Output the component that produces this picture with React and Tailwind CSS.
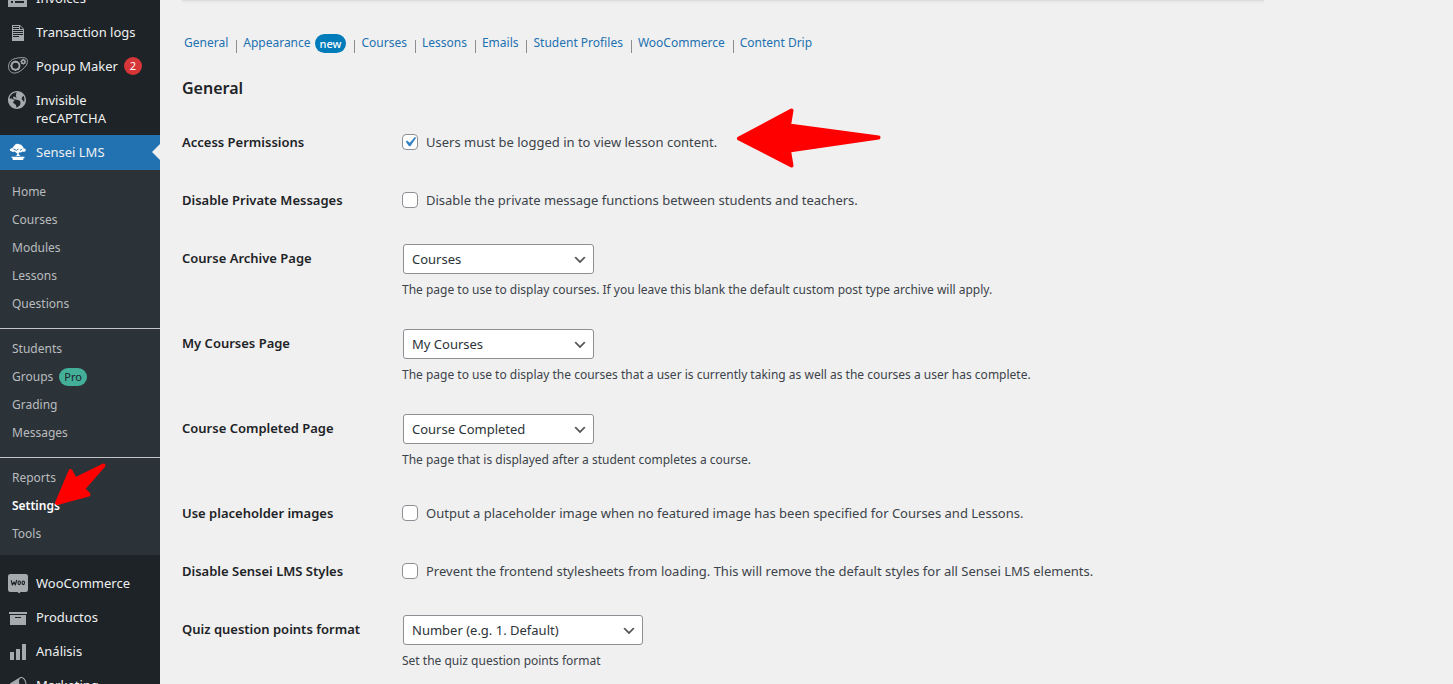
import React from "react";

const ICONS = {
    text: "M12 2l4 4v12H4V2h8zM5 3v1h6V3H5zm7 3h3l-3-3v3zM5 5v1h6V5H5zm10 3V7H5v1h10zm0 2V9H5v1h10zm0 2v-1H5v1h10zm-4 2v-1H5v1h6z",
    globe: "M9 0C4.03 0 0 4.03 0 9s4.03 9 9 9 9-4.03 9-9-4.03-9-9-9zm3.46 11.95c0 1.47-.8 3.3-4.06 4.7.3-4.17-2.52-3.69-3.2-5 .126-1.1.804-2.063 1.8-2.55-1.552-.266-3-.96-4.18-2 .05.47.28.904.64 1.21-.782-.295-1.458-.817-1.94-1.5.977-3.225 3.883-5.482 7.25-5.63-.84 1.38-1.5 4.13 0 5.57C7.23 7 6.26 5 5.41 5.79c-1.13 1.06.33 2.51 3.42 3.08 3.29.59 3.66 1.58 3.63 3.08zm1.34-4c-.32-1.11.62-2.23 1.69-3.14 1.027 1.88 1.224 4.104.54 6.13-.54-1.13-1.89-1.95-2.23-2.99z",
    archive: "M19 4v2H1V4h18zM2 7h16v10H2V7zm11 3V9H7v1h6z",
    chart: "M18 18V2h-4v16h4zm-6 0V7H8v11h4zm-6 0v-8H2v8h4z",
    megaphone: "M18.15 5.94c.46 1.62.38 3.22-.02 4.48-.42 1.28-1.26 2.18-2.3 2.48-.16.06-.26.06-.4.06-.06.02-.12.02-.18.02-.06.02-.14.02-.22.02h-6.8l2.22 5.5c.02.14-.06.26-.14.34-.08.1-.24.16-.34.16H6.95c-.1 0-.26-.06-.34-.16-.08-.08-.16-.2-.14-.34l-1-5.5H4.25l-.02-.02c-.5.06-1.08-.18-1.54-.62s-.88-1.08-1.06-1.88c-.24-.8-.2-1.56-.02-2.2.18-.62.58-1.08 1.06-1.3l.02-.02 9-5.4c.1-.06.18-.1.24-.16.06-.04.14-.08.24-.12.16-.08.28-.12.5-.18 1.04-.3 2.24.1 3.22.98s1.84 2.24 2.26 3.86zm-2.58 5.98h-.02c.4-.1.74-.34 1.04-.7.58-.7.86-1.76.86-3.04 0-.64-.1-1.3-.28-1.98-.34-1.36-1.02-2.5-1.78-3.24s-1.68-1.1-2.46-.88c-.82.22-1.4.96-1.7 2-.32 1.04-.28 2.36.06 3.72.38 1.36 1 2.5 1.8 3.24.78.74 1.62 1.1 2.48.88z",
    invoices: "M0 2h19v16H0V2zm3 10v2h2v-2H3zm4 0v2h9v-2H7zM3 7v2h2V7H3zm4 0v2h9V7H7z",
};

function Icon({ name }) {
    return (
        <svg viewBox="0 0 20 20" className="w-5 h-5 fill-[#a7aaad]" aria-hidden="true">
            <path fillRule="evenodd" d={ICONS[name]} />
        </svg>
    );
}

function PopupMakerIcon() {
    return (
        <svg viewBox="0 0 20 20" className="w-5 h-5 fill-none stroke-[#a7aaad]" aria-hidden="true">
            <path strokeWidth=".9" d="M4.500 2.500C7.500 .8 14 .3 17 .8C20 1.800 20 5 18.500 8C16 11.500 12 15 8.500 15.800C4.500 16.800 1 15 .6 10.500C.4 7 1.500 4.200 4.500 2.500Z" />
            <circle cx="7.500" cy="8.800" r="4" strokeWidth="1.900" />
            <path d="M7.500 3.800v1.500M7.500 12.500v1.500M2.300 8.800h1.500M3.800 5.100l1 1M3.800 12.500l1-1M11.200 12.500l-1-1" strokeWidth="1.300" />
            <circle cx="15.300" cy="4.700" r="1.700" strokeWidth="1.500" />
            <path d="M15.300 1.700v1.300M15.300 6.400v1.300M12.300 4.700h1.300M17 4.700h1.300M13.200 2.600l.9.900M16.500 5.900l.9.900M17.400 2.600l-.9.900M14.100 5.900l-.9.900" />
        </svg>
    );
}

function SenseiIcon() {
    return (
        <svg viewBox="0 0 20 20" className="w-5 h-5 fill-white" aria-hidden="true">
            <path d="M8.500 1C9.600.5 11 .8 11.700 1.500C13 1.500 14 2.200 14.200 3.200C15.400 3.500 15.700 4.500 15.200 5.200C17 5.300 18.200 6.300 17.800 7.600C17.400 8.900 15.500 9.200 14.300 8.500C13.500 9.600 12.200 9.600 11.300 9.200L10.600 10.200C10.500 11.400 11.500 12.200 12.800 13H7.500C9 12.300 9.600 11.600 9.100 10.500C8.300 9.700 7.300 9.300 6.600 8.500C5.300 9.200 4 9 3.600 8.200C2.100 8.200 1.500 7.300 1.900 6.500C2.300 5.600 3.500 5.200 4.800 5.300C4.400 4.300 5 3.400 6.100 3.200C6.300 2 7.200 1.200 8.500 1Z" />
            <path className="stroke-[#2271b1] fill-none" strokeWidth=".9" d="M5.500 6L8.500 7.300L10.500 6M12 7.300L14 6.300" />
            <path d="M3.500 13.800h13v1l-1.500 1l.5 1.300h-11l.5-1.300l-1.500-1Z" />
        </svg>
    );
}

function WooIcon() {
    return (
        <svg viewBox="0 0 20 20" className="w-5 h-5" aria-hidden="true">
            <path className="fill-[#a7aaad]" d="M2.300 0h15.400A2.300 2.300 0 0 1 20 2.300v13.400a2.300 2.300 0 0 1-2.300 2.300h-5.200l-1.200 1.600-1.800-1.600H2.300A2.300 2.300 0 0 1 0 15.700V2.300A2.300 2.300 0 0 1 2.300 0Z" />
            <path className="fill-none stroke-[#1d2327]" strokeWidth="1.200" strokeLinecap="round" strokeLinejoin="round" d="M3.300 6.600L4.400 11L6.100 8L7.300 11L8.600 6.400" />
            <ellipse className="fill-none stroke-[#1d2327]" strokeWidth="1.200" cx="11.200" cy="8.800" rx="1.200" ry="1.800" />
            <ellipse className="fill-none stroke-[#1d2327]" strokeWidth="1.200" cx="15.300" cy="8.800" rx="1.200" ry="1.800" />
        </svg>
    );
}

function MenuItem({ icon, children, active }) {
    return (
        <li className={active ? "relative bg-[#2271b1] pb-px" : ""}>
            <a href="#" className="flex items-start gap-2 px-2 py-2 text-[13px] leading-[18px] text-[#f0f0f1]">
                <span className="h-[18px] shrink-0">{icon}</span>
                <span className="flex items-center gap-[6px]">{children}</span>
            </a>
            {active && <span className="absolute right-0 top-[9px] border-8 border-transparent border-r-[#f0f0f0]" />}
        </li>
    );
}

const SUBMENU = [
    ["Home", "Courses", "Modules", "Lessons", "Questions"],
    ["Students", "Groups", "Grading", "Messages"],
    ["Reports", "Settings", "Tools"],
];

function Submenu() {
    return (
        <div className="bg-[#2c3338] pt-2 pb-[7px] mb-[11px]">
            {SUBMENU.map((group, i) => (
                <ul key={group[0]} className={i > 0 ? "mt-[10px] pt-[6px] border-t border-[#c3c4c7]" : ""}>
                    {group.map((item) => (
                        <li key={item} className="relative">
                            <a
                                href="#"
                                className={`flex items-center gap-[6px] h-7 px-3 text-[12px] ${item === "Settings" ? "font-semibold text-white" : "text-[#b9bcbf]"}`}
                            >
                                {item}
                                {item === "Groups" && (
                                    <span className="rounded-full bg-[#43af99] px-[5px] text-[11px] leading-[18px] text-[#1d2327]">Pro</span>
                                )}
                            </a>
                            {item === "Settings" && (
                                <svg viewBox="0 0 54 44" className="absolute left-[53px] -top-[30px] w-[54px] h-[44px]" aria-hidden="true">
                                    <path d="M4 41L17.500 9L22 17.500L50.500 3.500L30 27L35.500 32.500Z" fill="#f00" stroke="#f00" strokeWidth="4" strokeLinejoin="round" />
                                </svg>
                            )}
                        </li>
                    ))}
                </ul>
            ))}
        </div>
    );
}

function Sidebar() {
    return (
        <nav className="w-40 shrink-0 bg-[#1d2327]">
            <ul className="-mt-[19px]">
                <MenuItem icon={<Icon name="invoices" />}>Invoices</MenuItem>
                <MenuItem icon={<Icon name="text" />}>Transaction logs</MenuItem>
                <MenuItem icon={<PopupMakerIcon />}>
                    Popup Maker
                    <span className="w-[18px] rounded-full bg-[#d63638] text-center text-[11px] text-white">2</span>
                </MenuItem>
                <MenuItem icon={<Icon name="globe" />}>Invisible reCAPTCHA</MenuItem>
                <MenuItem icon={<SenseiIcon />} active>Sensei LMS</MenuItem>
                <li><Submenu /></li>
                <MenuItem icon={<WooIcon />}>WooCommerce</MenuItem>
                <MenuItem icon={<Icon name="archive" />}>Productos</MenuItem>
                <MenuItem icon={<Icon name="chart" />}>Análisis</MenuItem>
                <MenuItem icon={<Icon name="megaphone" />}>Marketing</MenuItem>
            </ul>
        </nav>
    );
}

const TABS = ["General", "Appearance", "Courses", "Lessons", "Emails", "Student Profiles", "WooCommerce", "Content Drip"];

function Tabs() {
    return (
        <ul className="flex flex-wrap items-center h-5 pl-[2px] text-[12px] text-[#2271b1]">
            {TABS.map((tab, i) => (
                <li key={tab} className="flex items-center">
                    {i > 0 && <span className="w-px h-[13px] ml-2 mr-[6px] mt-[6px] bg-[#8a8d91]" />}
                    <a href="#" className="flex items-center gap-1">
                        {tab}
                        {tab === "Appearance" && (
                            <span className="rounded-full bg-[#007cba] px-[5px] text-[11px] leading-[19px] font-medium text-white">new</span>
                        )}
                    </a>
                </li>
            ))}
        </ul>
    );
}

function Row({ id, title, children }) {
    return (
        <div className="flex">
            <label htmlFor={id} className="w-[220px] shrink-0 pt-5 text-[13px] leading-[18px] font-semibold text-[#1d2327]">
                {title}
            </label>
            <div className="grow">{children}</div>
        </div>
    );
}

function CheckRow({ id, title, text, checked, children }) {
    return (
        <Row id={id} title={title}>
            <div className="relative flex items-center gap-2 h-[58px]">
                <span className="relative w-4 h-4">
                    <input
                        id={id}
                        type="checkbox"
                        defaultChecked={checked}
                        className="peer block w-4 h-4 appearance-none rounded border border-[#8c8f94] bg-white"
                    />
                    <svg viewBox="0 0 20 20" className="absolute -left-[2px] -top-[2px] hidden w-5 h-5 fill-[#3582c4] pointer-events-none peer-checked:block" aria-hidden="true">
                        <path d="M14.830 4.890l1.340.94-5.810 8.380H9.020L5.780 9.670l1.340-1.250 2.570 2.400z" />
                    </svg>
                </span>
                <label htmlFor={id} className="pt-[2px] text-[13px]">{text}</label>
                {children}
            </div>
        </Row>
    );
}

function SelectRow({ id, title, value, text, width = "w-[191px]" }) {
    return (
        <Row id={id} title={title}>
            <div className="h-[85px] pt-[15px]">
                <div className={`relative ml-px ${width}`}>
                    <select
                        id={id}
                        className="block w-full h-[30px] appearance-none rounded-[3px] border border-[#8c8f94] bg-white pt-[2px] pl-2 pr-6 text-[13px] text-[#2c3338]"
                    >
                        <option>{value}</option>
                    </select>
                    <svg viewBox="0 0 20 20" className="absolute right-[6px] top-2 w-4 h-4 fill-[#555] pointer-events-none" aria-hidden="true">
                        <path d="M5 6l5 5 5-5 2 1-7 7-7-7 2-1z" />
                    </svg>
                </div>
                <p className="mt-[7px] text-[12px] leading-[18px]">{text}</p>
            </div>
        </Row>
    );
}

export default function App() {
    return (
        <div className="flex h-screen overflow-hidden bg-[#f0f0f0] font-['Noto_Sans',sans-serif] text-[#3c434a]">
            <Sidebar />
            <main className="grow pl-[22px]">
                <div className="h-px max-w-[1082px] bg-[#dcdcde] shadow-sm" />
                <div className="pt-8">
                    <Tabs />
                </div>
                <h2 className="mt-6 mb-[14px] text-[16px] leading-[22px] font-semibold text-[#1d2327]">General</h2>
                <form>
                    <CheckRow id="access" title="Access Permissions" text="Users must be logged in to view lesson content." checked>
                        <svg viewBox="0 0 146 60" className="absolute left-[334px] -top-[5px] w-[146px] h-[60px]" aria-hidden="true">
                            <path d="M3 30.500L55.500 2.500L53 17.500L142.500 29.500L53 42.500L55.500 57.500Z" fill="#f00" stroke="#f00" strokeWidth="4" strokeLinejoin="round" />
                        </svg>
                    </CheckRow>
                    <CheckRow id="messages" title="Disable Private Messages" text="Disable the private message functions between students and teachers." />
                    <SelectRow
                        id="archive"
                        title="Course Archive Page"
                        value="Courses"
                        text="The page to use to display courses. If you leave this blank the default custom post type archive will apply."
                    />
                    <SelectRow
                        id="my-courses"
                        title="My Courses Page"
                        value="My Courses"
                        text="The page to use to display the courses that a user is currently taking as well as the courses a user has complete."
                    />
                    <SelectRow
                        id="completed"
                        title="Course Completed Page"
                        value="Course Completed"
                        text="The page that is displayed after a student completes a course."
                    />
                    <CheckRow id="placeholder" title="Use placeholder images" text="Output a placeholder image when no featured image has been specified for Courses and Lessons." />
                    <CheckRow
                        id="styles"
                        title="Disable Sensei LMS Styles"
                        text="Prevent the frontend stylesheets from loading. This will remove the default styles for all Sensei LMS elements."
                    />
                    <SelectRow
                        id="quiz"
                        title="Quiz question points format"
                        value="Number (e.g. 1. Default)"
                        text="Set the quiz question points format"
                        width="w-[240px]"
                    />
                </form>
            </main>
        </div>
    );
}
